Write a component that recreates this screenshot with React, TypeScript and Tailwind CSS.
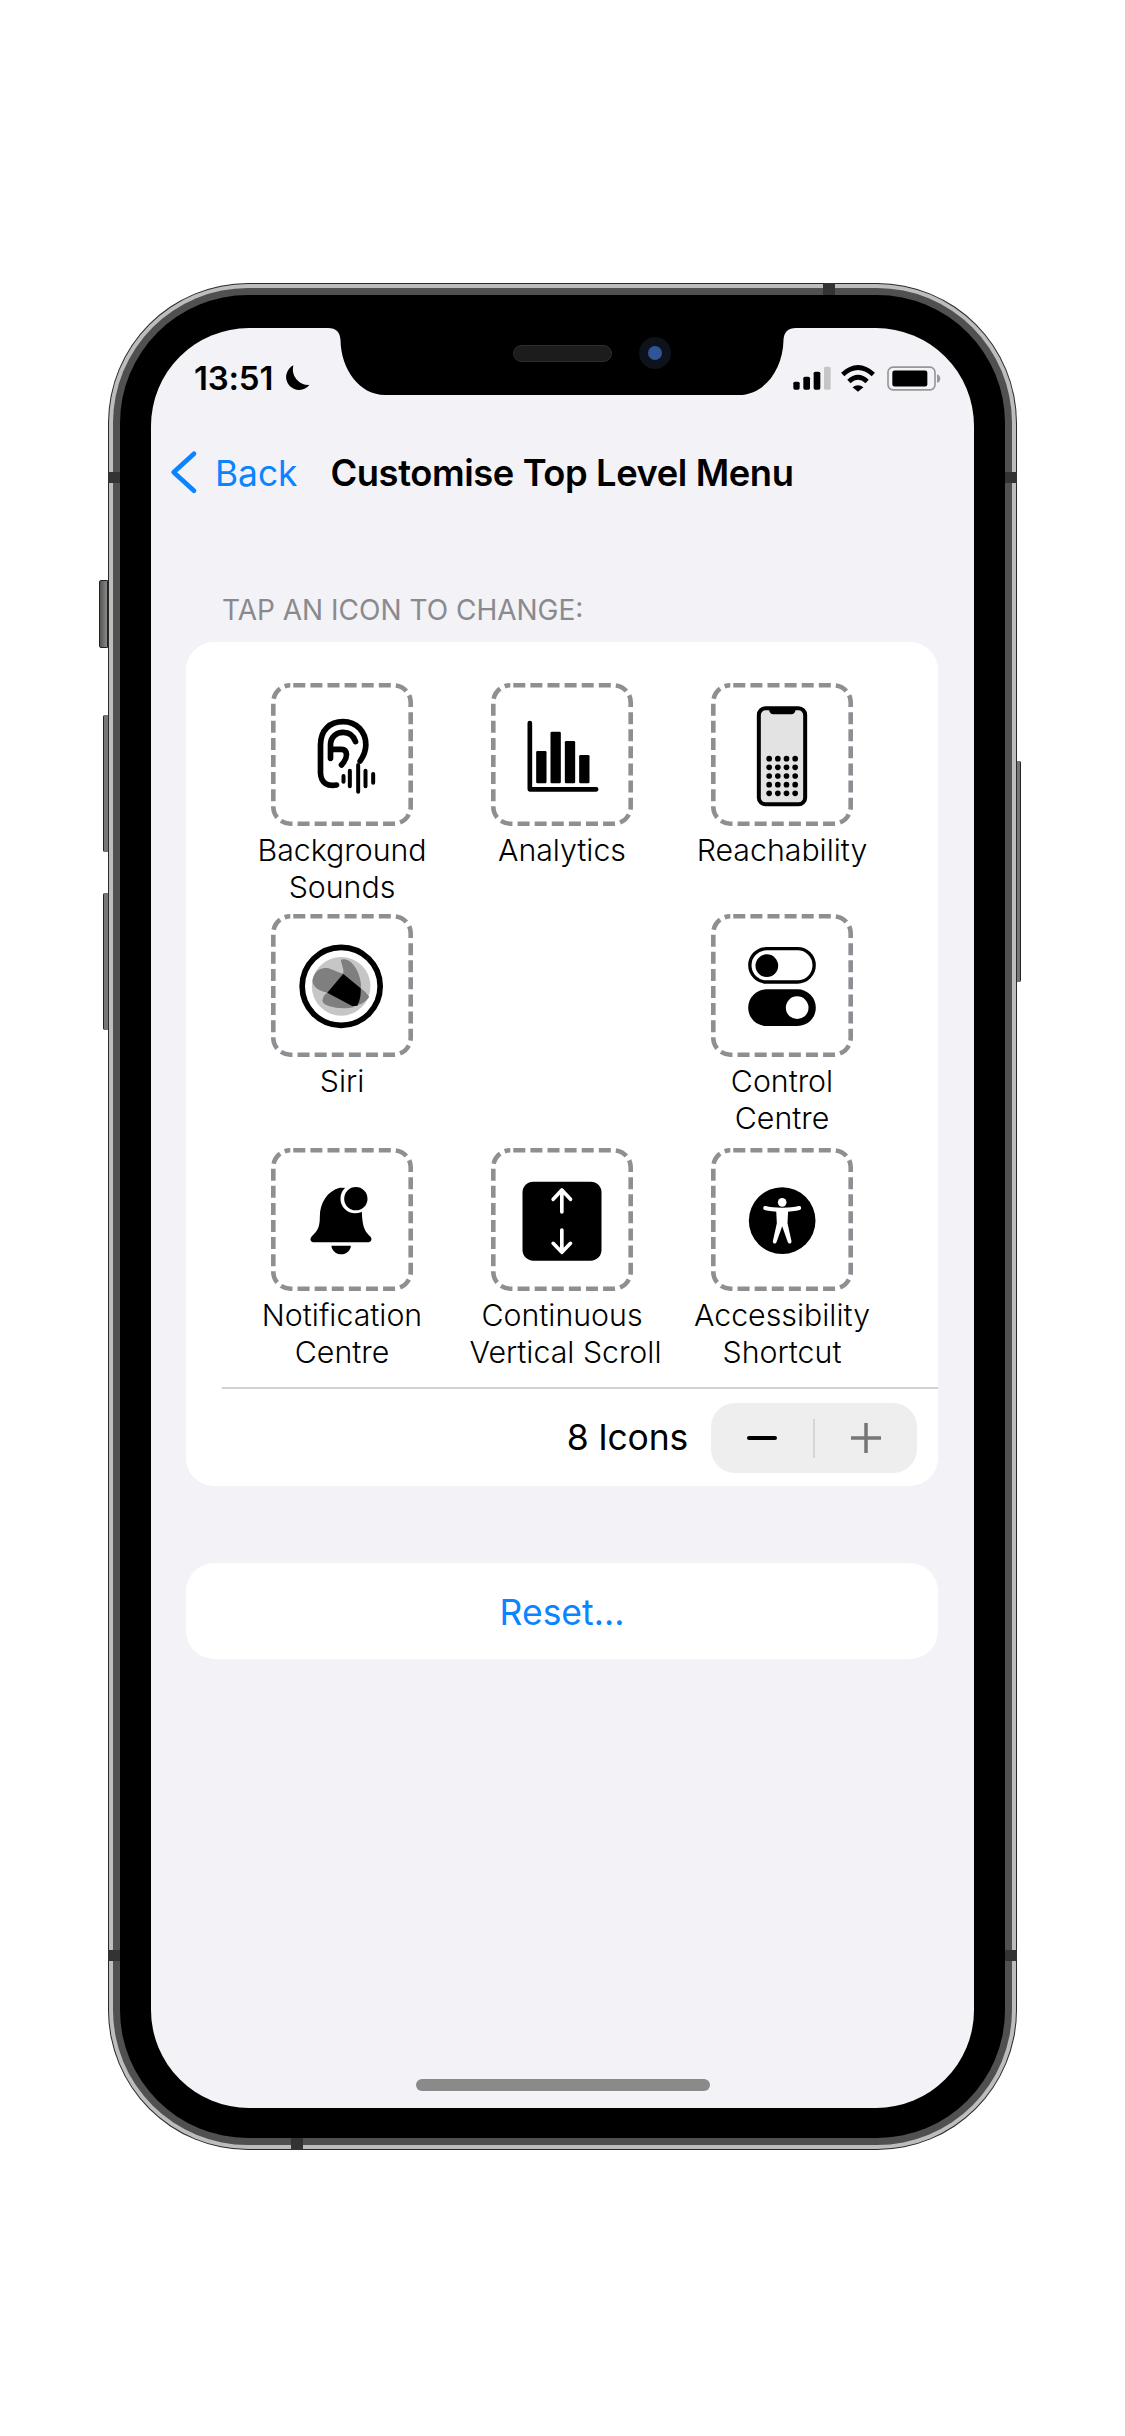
import type { ReactNode } from "react";

const FONT = "font-['Inter','Liberation_Sans',sans-serif]";

function Tile({ box, children }: { box: string; children: ReactNode }) {
  return (
    <div className="relative h-[143px] w-[142px]">
      <svg viewBox="0 0 142 143" className="absolute inset-0 h-full w-full">
        <rect x="2.3" y="2.3" width="137.4" height="138.4" rx="17" fill="none" stroke="#8e8e93" strokeWidth="4.6" strokeDasharray="12 5.1" strokeDashoffset="-3" />
      </svg>
      <svg viewBox={box} className="absolute left-0 top-[2px] h-full w-full">
        {children}
      </svg>
    </div>
  );
}

function EarIcon() {
  return (
    <Tile box="275 130 423 429">
      <g fill="none" stroke="#000" strokeLinecap="round" strokeLinejoin="round">
        <g strokeWidth="17">
          <path d="M470 430C445 435 424 425 422 395L422 310C422 265 450 240 490 240C530 240 558 270 558 310C558 330 550 345 541 358" />
          <path d="M452 350L452 310C452 285 470 272 490 272C510 272 522 285 527 300" />
          <path d="M456 323L485 323C505 323 505 348 485 370" />
        </g>
        <g strokeWidth="12">
          <path d="M491 403V420M510 387V434M535 370V450M557 387V434M580 397V423" />
        </g>
      </g>
    </Tile>
  );
}

function ChartIcon() {
  return (
    <Tile box="35 70 423 429">
      <path d="M150 184V383H349" fill="none" stroke="#000" strokeWidth="14" strokeLinecap="round" strokeLinejoin="round" />
      <rect x="169" y="268" width="31" height="97" rx="4" />
      <rect x="212" y="210" width="31" height="155" rx="4" />
      <rect x="255" y="238" width="31" height="127" rx="4" />
      <rect x="298" y="280" width="31" height="85" rx="4" />
    </Tile>
  );
}

function PhoneIcon() {
  const cols = [868, 894, 920, 946];
  const rows = [291, 317, 343, 369, 395];
  return (
    <Tile box="695 70 423 429">
      <rect x="837" y="140" width="139" height="288" rx="20" fill="#e3e3e3" stroke="#000" strokeWidth="12" />
      <path d="M868 139H947V144C947 152 942 158 934 158H881C873 158 868 152 868 144Z" />
      {rows.map((y) => cols.map((x) => <circle key={`${x}-${y}`} cx={x} cy={y} r="8.500" />))}
    </Tile>
  );
}

function SiriIcon() {
  return (
    <Tile box="97 45 423 429">
      <circle cx="306" cy="256" r="117" fill="#fff" stroke="#000" strokeWidth="17" />
      <circle cx="306" cy="256" r="88" fill="#c6c6c6" />
      <path d="M220 240C222 212 245 196 268 202C285 207 298 216 312 218L264 275C245 270 222 262 220 240Z" fill="#7f7f7f" />
      <path d="M305 176C322 170 340 182 352 205C362 225 367 245 365 262L312 218C316 205 306 190 305 176Z" fill="#7f7f7f" />
      <path d="M250 298C252 285 258 278 265 275L345 318C320 325 290 322 272 316C260 312 250 308 250 298Z" fill="#7f7f7f" />
      <path d="M365 262C375 270 385 280 390 288C382 300 370 308 358 312Z" fill="#7f7f7f" />
      <path d="M312 218L365 262C365 285 362 300 355 314L340 316L264 275Z" />
    </Tile>
  );
}

function ToggleIcon() {
  return (
    <Tile box="95 45 423 429">
      <rect x="210" y="143" width="193" height="100" rx="50" fill="none" stroke="#000" strokeWidth="10" />
      <circle cx="261" cy="194" r="34" />
      <rect x="205" y="265" width="203" height="110" rx="55" />
      <circle cx="352" cy="320" r="34" fill="#fff" />
    </Tile>
  );
}

function BellIcon() {
  return (
    <Tile box="67 55 423 429">
      <path d="M272 168C235 178 212 212 212 255C212 290 203 298 188 314C180 324 185 332 195 332H355C366 332 371 324 363 314C348 298 340 290 338 240L338 170Z" />
      <circle cx="318" cy="201" r="44" fill="#fff" />
      <circle cx="320" cy="201" r="35" />
      <path d="M247 342H305C305 356 291 368 276 368C261 368 247 356 247 342Z" />
    </Tile>
  );
}

function ScrollIcon() {
  return (
    <Tile box="727 55 423 429">
      <rect x="820" y="150" width="237" height="237" rx="32" />
      <path d="M938 241V175M912 203L938 175L964 203M938 295V362M912 335L938 362L964 335" fill="none" stroke="#fff" strokeWidth="11" strokeLinecap="round" strokeLinejoin="round" />
    </Tile>
  );
}

function AccessIcon() {
  return (
    <Tile box="95 55 423 429">
      <circle cx="307" cy="267" r="100" />
      <circle cx="307" cy="212" r="13" fill="#fff" />
      <path d="M256 229C280 236 334 236 358 229" fill="none" stroke="#fff" strokeWidth="12" strokeLinecap="round" />
      <path d="M289 234H325L323 275L335 329C335 337 327 338 324 332L307 284L290 332C287 338 279 337 279 329L291 275Z" fill="#fff" />
    </Tile>
  );
}

const items = [
  { icon: <EarIcon />, lines: ["Background", "Sounds"] },
  { icon: <ChartIcon />, lines: ["Analytics"] },
  { icon: <PhoneIcon />, lines: ["Reachability"] },
  { icon: <SiriIcon />, lines: ["Siri"] },
  null,
  { icon: <ToggleIcon />, lines: ["Control", "Centre"] },
  { icon: <BellIcon />, lines: ["Notification", "Centre"] },
  { icon: <ScrollIcon />, lines: ["Continuous", "Vertical Scroll"] },
  { icon: <AccessIcon />, lines: ["Accessibility", "Shortcut"] },
];

function StatusBar() {
  return (
    <div className="flex h-[100px] items-center justify-between pl-[43px] pr-[33px]">
      <div className="flex items-center gap-[9px]">
        <span className="text-[33px] leading-none font-semibold tracking-[-0.2px] text-black">13:51</span>
        <svg viewBox="585 287 81 76" className="h-[26px] w-[28px]">
          <path d="M618 288A38 38 0 1 0 665 345A45 45 0 0 1 618 288Z" />
        </svg>
      </div>
      <div className="flex items-center">
        <svg viewBox="618 288 114 72" className="mr-[8px] h-[24px] w-[38px]">
          <rect x="619" y="335" width="19" height="24" rx="5" />
          <rect x="649" y="320" width="20" height="39" rx="5" />
          <rect x="680" y="305" width="20" height="54" rx="5" />
          <rect x="711" y="290" width="20" height="69" rx="5" fill="#c5c5c7" />
        </svg>
        <svg viewBox="762 286 104 74" className="mr-[10px] h-[27px] w-[38px]">
          <path d="M772 312Q814 274 856 312M789 331Q814 308 839 331" fill="none" stroke="#000" strokeWidth="13" />
          <path d="M799 347Q814 336 829 347L814 359Z" />
        </svg>
        <svg viewBox="897 288 162 74" className="h-[25px] w-[54px]">
          <rect x="900" y="291" width="141" height="68" rx="15" fill="none" stroke="#98989c" strokeWidth="5" />
          <rect x="913" y="301" width="105" height="48" rx="7" />
          <path d="M1047 312C1054 314 1057 319 1057 325C1057 331 1054 336 1047 338Z" fill="#98989c" />
        </svg>
      </div>
    </div>
  );
}

function NotchShape() {
  return (
    <svg viewBox="0 0 468 67" className="absolute left-[177px] top-0 h-[67px] w-[468px]">
      <path d="M0 0C8 0 12 4 12.500 12C13 42 32 67 57 67H411C436 67 455 42 455.500 12C456 4 460 0 468 0Z" fill="#000" />
    </svg>
  );
}

export default function App() {
  return (
    <div className={`flex min-h-[2436px] w-full justify-center bg-white pt-[283px] ${FONT}`}>
      <div className="relative h-[1867px] w-[909px]">
        {/* side buttons */}
        <div className="absolute -left-[9px] top-[297px] h-[68px] w-[9px] rounded-l-[2px] border border-[#222] bg-gradient-to-r from-[#555] to-[#8a8a85]" />
        <div className="absolute -left-[5px] top-[432px] h-[137px] w-[5px] rounded-l-[2px] border-l border-[#222] bg-[#777]" />
        <div className="absolute -left-[5px] top-[610px] h-[137px] w-[5px] rounded-l-[2px] border-l border-[#222] bg-[#777]" />
        <div className="absolute -right-[4px] top-[478px] h-[221px] w-[4px] rounded-r-[2px] border-r border-[#222] bg-[#777]" />

        {/* frame */}
        <div className="h-full w-full rounded-[140px] bg-[#2a2a2a] p-px">
          <div className="h-full w-full rounded-[139px] bg-[#bdbdbd] p-[4px]">
            <div className="h-full w-full rounded-[135px] bg-[#505050] p-[7px]">
              <div className="flex h-full w-full rounded-[128px] bg-black pb-[30px] pl-[31px] pr-[31px] pt-[33px]">
                <div className="relative flex flex-1 flex-col overflow-hidden rounded-[98px] bg-[#f2f2f7]">
                  <NotchShape />
                  <div className="absolute left-[362px] top-[17px] h-[17px] w-[99px] rounded-full border border-[#2e2e2e] bg-[#1c1c1c]" />
                  <div className="absolute left-[488px] top-[9px] flex h-[32px] w-[32px] items-center justify-center rounded-full bg-[#0d121b]">
                    <div className="h-[14px] w-[14px] rounded-full bg-[#2f5596]" />
                  </div>

                  <StatusBar />

                  <div className="mt-[14px] flex h-[60px] items-center pl-[19px]">
                    <svg viewBox="240 540 84 132" className="h-[44px] w-[28px]">
                      <path d="M312 551L251 607L312 662" fill="none" stroke="#0a84ff" strokeWidth="14" strokeLinecap="round" strokeLinejoin="round" />
                    </svg>
                    <span className="ml-[17px] mt-[3px] text-[35.300px] leading-none text-[#0a84ff]">Back</span>
                    <span className="ml-[33px] mt-[3px] text-[36.300px] leading-none font-semibold tracking-[-0.4px] text-black">Customise Top Level Menu</span>
                  </div>

                  <div className="mt-[88px] h-[40px] pl-[71px] text-[28px] leading-[40px] text-[#8a8a8e]">TAP AN ICON TO CHANGE:</div>

                  <div className="ml-[35px] mr-[36px] mt-[12px] h-[844px] rounded-[28px] bg-white pt-[41px]">
                    <div className="ml-[46px] grid w-[660px] grid-cols-3 grid-rows-[231px_234px_239px]">
                      {items.map((item, i) =>
                        item ? (
                          <div key={i} className="flex flex-col items-center">
                            {item.icon}
                            <div className="mt-[6px] text-center text-[30.300px] leading-[37px] font-[275] text-black">
                              {item.lines.map((line) => (
                                <div key={line} className={line === "Vertical Scroll" ? "pl-[7px]" : ""}>
                                  {line}
                                </div>
                              ))}
                            </div>
                          </div>
                        ) : (
                          <div key={i} />
                        ),
                      )}
                    </div>
                    <div className="ml-[36px] h-[2px] bg-[#d1d1d3]" />
                    <div className="mt-[14px] flex h-[70px] items-center justify-end pr-[21px]">
                      <span className="mr-[23px] text-[35.500px] leading-none tracking-[-0.2px] text-black">8 Icons</span>
                      <div className="flex h-[70px] w-[206px] items-center rounded-[24px] bg-[#eeeeef]">
                        <div className="flex flex-1 items-center justify-center">
                          <div className="h-[4px] w-[30px] rounded-full bg-black" />
                        </div>
                        <div className="h-[39px] w-[2px] bg-[#d6d6d8]" />
                        <div className="flex flex-1 items-center justify-center">
                          <svg viewBox="0 0 30 30" className="h-[30px] w-[30px]">
                            <path d="M0 15H30M15 0V30" stroke="#767676" strokeWidth="3.500" strokeLinecap="round" />
                          </svg>
                        </div>
                      </div>
                    </div>
                  </div>

                  <div className="ml-[35px] mr-[36px] mt-[77px] flex h-[96px] items-center justify-center rounded-[28px] bg-white pt-[3px] text-[35.500px] leading-none text-[#0a84ff]">
                    Reset...
                  </div>

                  <div className="mx-auto mb-[17px] mt-auto h-[12px] w-[294px] rounded-full bg-[#8a8a8a]" />
                </div>
              </div>
            </div>
          </div>
        </div>

        {/* antenna bands */}
        <div className="absolute left-0 top-[189px] h-[11px] w-[12px] bg-[#333]" />
        <div className="absolute right-0 top-[189px] h-[11px] w-[12px] bg-[#333]" />
        <div className="absolute left-0 top-[1667px] h-[11px] w-[12px] bg-[#333]" />
        <div className="absolute right-0 top-[1667px] h-[11px] w-[12px] bg-[#333]" />
        <div className="absolute left-[715px] top-0 h-[12px] w-[12px] bg-[#333]" />
        <div className="absolute bottom-0 left-[183px] h-[12px] w-[12px] bg-[#333]" />
      </div>
    </div>
  );
}
